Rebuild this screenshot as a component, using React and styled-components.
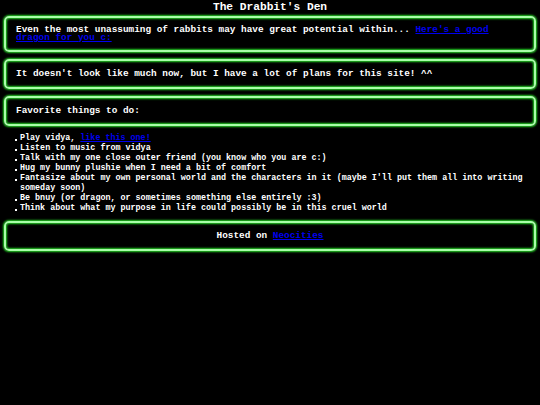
import React from "react";
import styled, { createGlobalStyle } from "styled-components";

const Global = createGlobalStyle`
  html, body { margin: 0; padding: 0; background: #000; }
  body {
    color: #fff;
    font-family: "Liberation Mono", "DejaVu Sans Mono", monospace;
    font-weight: bold;
    width: 540px;
    height: 405px;
    overflow: hidden;
  }
`;

const Page = styled.div`
  display: flex;
  flex-direction: column;
  padding: 1px 4px 0;
`;

const Title = styled.h1`
  margin: 0;
  font-size: 11.2px;
  line-height: 12px;
  text-align: center;
  font-weight: bold;
`;

const Box = styled.div`
  border: 2px solid #a8ffa8;
  border-radius: 5px;
  box-shadow: 0 0 2px 1px #22cc22, inset 0 0 2px 1px #22cc22;
  padding: ${(p) => p.$pad || "8px 10px"};
  margin-top: ${(p) => p.$top || "7px"};
  font-size: 9.4px;
  line-height: ${(p) => p.$lh || "10px"};
  text-align: ${(p) => (p.$center ? "center" : "left")};
`;

const Link = styled.a`
  color: #0000ee;
  text-decoration: underline;
`;

const List = styled.ul`
  list-style: none;
  margin: 7px 0 0;
  padding: 0 4px 0 16px;
  font-size: 8.4px;
  line-height: 10px;
`;

const Item = styled.li`
  position: relative;
`;

const Dot = styled.span`
  position: absolute;
  left: -5px;
  top: 6px;
  width: 2px;
  height: 2px;
  background: #fff;
`;

const items = [
  <>Play vidya, <Link href="#">like this one!</Link></>,
  "Listen to music from vidya",
  "Talk with my one close outer friend (you know who you are c:)",
  "Hug my bunny plushie when I need a bit of comfort",
  "Fantasize about my own personal world and the characters in it (maybe I'll put them all into writing someday soon)",
  "Be bnuy (or dragon, or sometimes something else entirely :3)",
  "Think about what my purpose in life could possibly be in this cruel world",
];

export default function App() {
  return (
    <>
      <Global />
      <Page>
        <Title>The Drabbit's Den</Title>
        <Box $top="3px" $pad="8px 10px 8px" $lh="8px">
          Even the most unassuming of rabbits may have great potential within...{" "}
          <Link href="#">Here's a good dragon for you c:</Link>
        </Box>
        <Box>It doesn't look like much now, but I have a lot of plans for this site! ^^</Box>
        <Box>Favorite things to do:</Box>
        <List>
          {items.map((it, i) => (
            <Item key={i}>
              <Dot />
              {it}
            </Item>
          ))}
        </List>
        <Box $top="8px" $center>
          Hosted on <Link href="#">Neocities</Link>
        </Box>
      </Page>
    </>
  );
}
